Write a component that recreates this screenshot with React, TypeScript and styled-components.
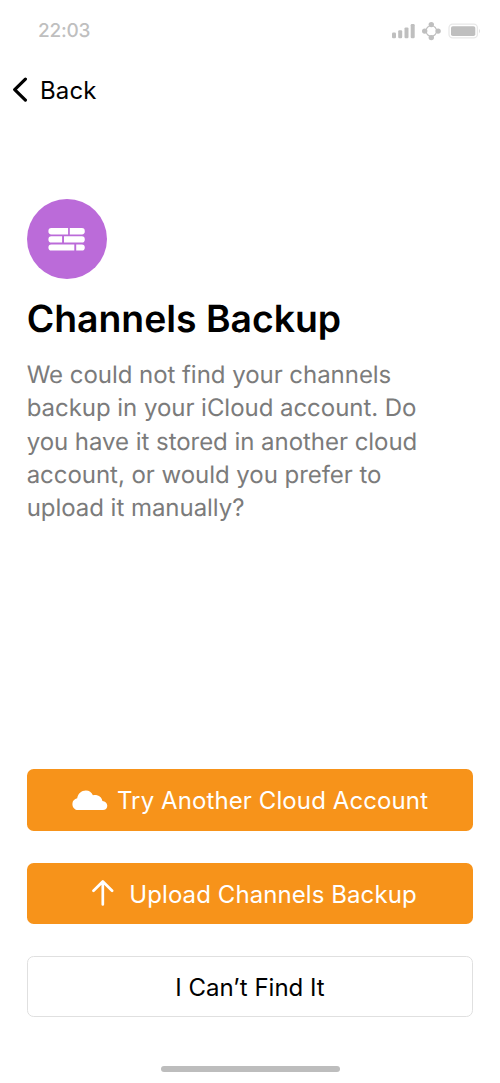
import React from "react";
import styled, { createGlobalStyle } from "styled-components";

const GlobalStyle = createGlobalStyle`
  *, *::before, *::after { box-sizing: border-box; }
  body { margin: 0; background: #fff; }
  button { font: inherit; margin: 0; cursor: pointer; }
`;

const Screen = styled.main`
  display: flex;
  flex-direction: column;
  width: 500px;
  height: 1083px;
  overflow: hidden;
  background: #fff;
  color: #000;
  font-family: Inter, "Liberation Sans", sans-serif;
  text-rendering: geometricPrecision;
`;

const StatusBar = styled.header`
  display: flex;
  align-items: center;
  justify-content: space-between;
  height: 61px;
  padding: 0 20px 0 38px;
  color: #bfbfbf;
`;

const Clock = styled.time`
  font-size: 19px;
  font-weight: 500;
  letter-spacing: -0.25px;
  line-height: 24px;
`;

const StatusIcons = styled.svg`
  display: block;
  width: 90px;
  height: 20px;
`;

const NavBar = styled.nav`
  display: flex;
  align-items: center;
  height: 58px;
  padding-left: 12px;
`;

const BackButton = styled.button`
  display: flex;
  align-items: center;
  gap: 12px;
  padding: 0;
  border: 0;
  background: none;
  color: #000;
  font-size: 24px;
  line-height: 30px;
`;

const Content = styled.section`
  display: flex;
  flex: 1;
  flex-direction: column;
  align-items: flex-start;
  padding: 79.5px 26.67px 0;
`;

const Badge = styled.div`
  display: flex;
  align-items: center;
  justify-content: center;
  width: 80px;
  height: 80px;
  border-radius: 50%;
  background: #bb6bd9;
`;

const Title = styled.h1`
  margin: 18px 0 0;
  font-size: 37.33px;
  font-weight: 600;
  line-height: 46px;
`;

const Description = styled.p`
  width: 400px;
  margin: 15.6px 0 0;
  color: #7b7b7b;
  font-size: 24px;
  letter-spacing: -0.04px;
  line-height: 33.33px;
`;

const Actions = styled.div`
  display: flex;
  flex-direction: column;
  gap: 32px;
  padding: 0 26.67px;
`;

const ActionButton = styled.button<{ $outlined?: boolean; $gap?: number; $indent?: number }>`
  display: flex;
  align-items: center;
  justify-content: center;
  gap: ${({ $gap = 0 }) => $gap}px;
  height: 61.33px;
  padding: 0 0 0 ${({ $indent = 0 }) => $indent}px;
  border: ${({ $outlined }) => ($outlined ? "1.33px solid #e0e0e0" : "0")};
  border-radius: 6.67px;
  background: ${({ $outlined }) => ($outlined ? "#fff" : "#f7931a")};
  color: ${({ $outlined }) => ($outlined ? "#000" : "#fff")};
  font-size: 24px;
  line-height: 30px;
`;

const HomeArea = styled.footer`
  display: flex;
  align-items: flex-end;
  justify-content: center;
  height: 65.67px;
  padding: 0 0 10.67px 1.33px;
`;

const HomeIndicator = styled.div`
  width: 178.67px;
  height: 6.67px;
  border-radius: 4px;
  background: #bdbdbd;
`;

const Label = styled.span<{ $spacing?: number; $drop?: number }>`
  padding-top: ${({ $drop = 2 }) => $drop}px;
  letter-spacing: ${({ $spacing = 0 }) => $spacing}px;
`;

function StatusGlyphs() {
  return (
    <StatusIcons viewBox="0 0 90 20" fill="#bfbfbf" aria-hidden="true">
      <rect x="2" y="11.6" width="4" height="5.7" rx="1.2" />
      <rect x="8.2" y="9.3" width="4" height="8" rx="1.2" />
      <rect x="14.5" y="6.4" width="4" height="10.9" rx="1.2" />
      <rect x="20.7" y="3" width="4" height="14.3" rx="1.2" />
      <circle cx="41.3" cy="10" r="5.3" fill="none" stroke="#bfbfbf" strokeWidth="1.1" />
      <circle cx="41.3" cy="3.6" r="2.7" />
      <circle cx="41.3" cy="16.6" r="2.7" />
      <circle cx="34.7" cy="10.1" r="2.7" />
      <circle cx="48.1" cy="10.1" r="2.7" />
      <rect x="59" y="3.1" width="28.4" height="13.8" rx="3.6" fill="none" stroke="#e8e8e8" strokeWidth="1.3" />
      <rect x="61" y="5.2" width="24.3" height="9.8" rx="1.8" />
      <path d="M89 7.7 Q91 10 89 12.3 Z" fill="#e0e0e0" />
    </StatusIcons>
  );
}

function ChevronIcon() {
  return (
    <svg width="16" height="26" viewBox="0 0 16 26" fill="none" aria-hidden="true">
      <path d="M13.4 2.1 L2.7 12.6 L13.4 23.1" stroke="#000" strokeWidth="3.2" strokeLinecap="round" strokeLinejoin="round" />
    </svg>
  );
}

function BricksIcon() {
  return (
    <svg width="38" height="24" viewBox="0 0 38 24" fill="#fff" aria-hidden="true">
      <g transform="translate(-0.4 0.3)">
        <path d="M3.7 .8H20.5V7.1H3.7Q.8 7.1 .8 3.95Q.8 .8 3.7 .8Z M22.2 .8H34.3Q37.2 .8 37.2 3.95Q37.2 7.1 34.3 7.1H22.2Z" />
        <path d="M3.7 9H14.5V15.2H3.7Q.8 15.2 .8 12.1Q.8 9 3.7 9Z M16.4 9H34.3Q37.2 9 37.2 12.1Q37.2 15.2 34.3 15.2H16.4Z" />
        <path d="M3.7 17.1H26.7V23.3H3.7Q.8 23.3 .8 20.2Q.8 17.1 3.7 17.1Z M28.6 17.1H34.3Q37.2 17.1 37.2 20.2Q37.2 23.3 34.3 23.3H28.6Z" />
      </g>
    </svg>
  );
}

function CloudIcon() {
  return (
    <svg width="36" height="21" viewBox="0 0 36 21" fill="#fff" aria-hidden="true">
      <path transform="translate(0.4 0.5)" d="M5.6 19.6C2.4 19.6 0 17 0 13.5C0 10.5 2 8.3 4.8 7.8C5.4 3.3 9 0 13.5 0C16.8 0 19.2 1.8 20.5 4.8C21.8 4.5 23.2 4.3 24.6 4.7C27.5 5.4 29.6 7.6 30 10.6C32.8 10.8 34.9 12.8 34.9 15.2C34.9 17.7 33 19.6 30.6 19.6Z" />
    </svg>
  );
}

function UploadIcon() {
  return (
    <svg width="22" height="26" viewBox="0 0 22 26" fill="none" aria-hidden="true">
      <path d="M10.8 24.5V1.9 M1.5 10.8L10.8 1.5L20.1 10.8" stroke="#fff" strokeWidth="2.7" strokeLinecap="round" strokeLinejoin="round" />
    </svg>
  );
}

export default function App() {
  return (
    <>
      <GlobalStyle />
      <Screen>
        <StatusBar>
          <Clock>22:03</Clock>
          <StatusGlyphs />
        </StatusBar>
        <NavBar>
          <BackButton type="button">
            <ChevronIcon />
            <Label $spacing={0.1}>Back</Label>
          </BackButton>
        </NavBar>
        <Content>
          <Badge>
            <BricksIcon />
          </Badge>
          <Title>Channels Backup</Title>
          <Description>
            We could not find your channels
            <br />
            backup in your iCloud account. Do
            <br />
            you have it stored in another cloud
            <br />
            account, or would you prefer to
            <br />
            upload it manually?
          </Description>
        </Content>
        <Actions>
          <ActionButton type="button" $gap={9}>
            <CloudIcon />
            <Label $spacing={0.1}>Try Another Cloud Account</Label>
          </ActionButton>
          <ActionButton type="button" $gap={15} $indent={9}>
            <UploadIcon />
            <Label $spacing={0.08} $drop={3}>Upload Channels Backup</Label>
          </ActionButton>
          <ActionButton type="button" $outlined>
            <Label>I Can’t Find It</Label>
          </ActionButton>
        </Actions>
        <HomeArea>
          <HomeIndicator />
        </HomeArea>
      </Screen>
    </>
  );
}
